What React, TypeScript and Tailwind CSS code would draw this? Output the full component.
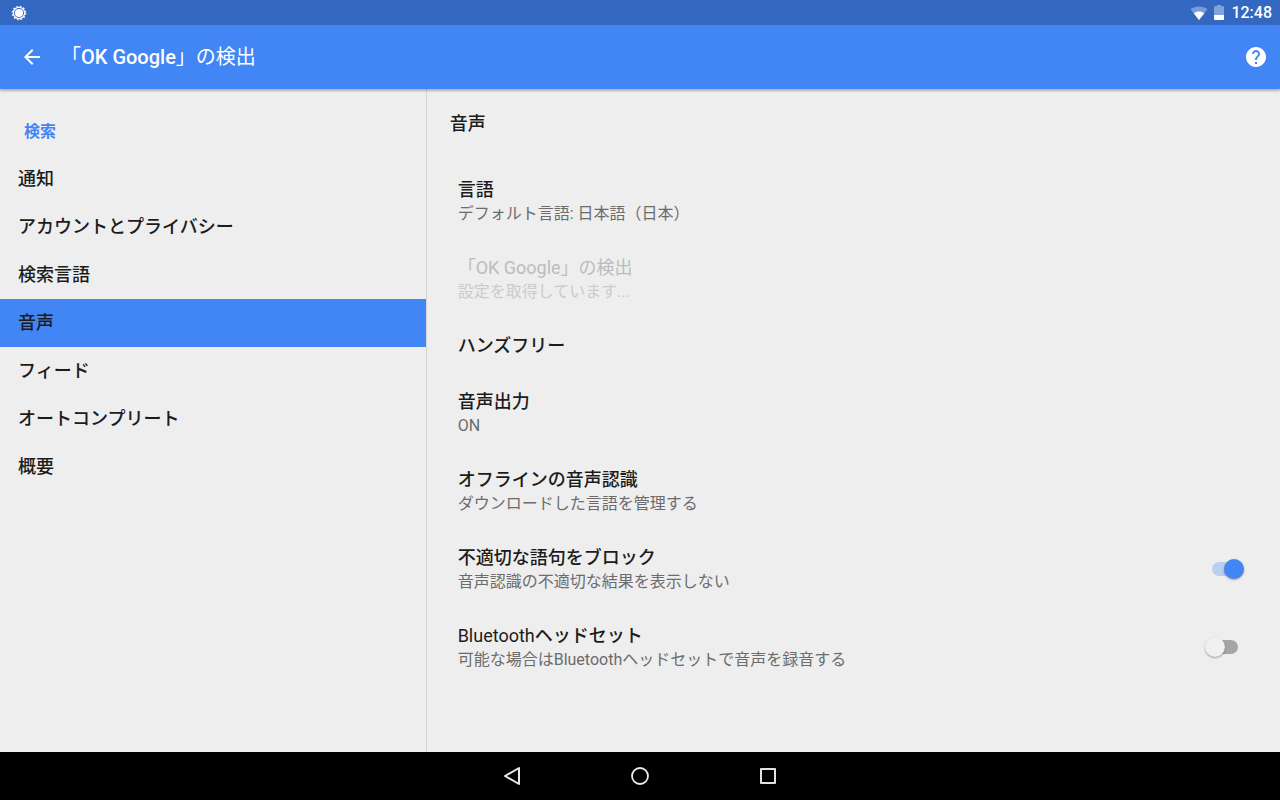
import { useId, useState } from "react";

const navItems = [
  "通知",
  "アカウントとプライバシー",
  "検索言語",
  "音声",
  "フィード",
  "オートコンプリート",
  "概要",
];

type Setting = {
  title: string;
  summary?: string;
  disabled?: boolean;
};

const settings: Setting[] = [
  { title: "言語", summary: "デフォルト言語: 日本語（日本）" },
  { title: "「OK Google」の検出", summary: "設定を取得しています...", disabled: true },
  { title: "ハンズフリー" },
  { title: "音声出力", summary: "ON" },
  { title: "オフラインの音声認識", summary: "ダウンロードした言語を管理する" },
];

function StatusBar() {
  return (
    <div className="flex h-[25px] items-center justify-between bg-[#3367c0] pl-[11px] pr-2 text-white">
      <svg className="size-4" viewBox="0 0 16 16" fill="none" stroke="#fff">
        <circle cx="8" cy="8" r="6.5" strokeWidth="1.8" strokeDasharray="1.7 1.703" opacity=".85" />
        <circle cx="8" cy="8" r="5.6" strokeWidth="1.2" />
        <circle cx="8" cy="8" r="4.1" fill="#fff" stroke="none" />
      </svg>
      <div className="flex items-center">
        <svg className="h-4 w-[18px]" viewBox="0 0 18 16" fill="#fff">
          <path d="M9 15 .5 4.200C5.300.7 12.700.7 17.500 4.200Z" opacity=".35" />
          <path d="M9 15 3.700 8.300c3-2.300 7.600-2.300 10.600 0Z" />
        </svg>
        <svg className="ml-[6px] h-4 w-[10px]" viewBox="0 0 10 16" fill="#fff">
          <path d="M3 0h4v1.200h2.200c.5 0 .8.300.8.800V10H0V2c0-.5.300-.8.800-.8H3Z" opacity=".4" />
          <path d="M0 10h10v4.200c0 .5-.3.800-.8.800H.8c-.5 0-.8-.3-.8-.8Z" />
        </svg>
        <span className="ml-[7px] text-base font-medium">12:48</span>
      </div>
    </div>
  );
}

function Header() {
  return (
    <header className="z-10 flex h-16 items-center bg-[#4285f4] pl-5 pr-3 text-white shadow-[0_2px_2px_rgba(0,0,0,0.25)]">
      <button type="button" aria-label="戻る" className="size-6">
        <svg viewBox="0 0 24 24" fill="#fff">
          <path d="M20 11H7.830l5.590-5.590L12 4l-8 8 8 8 1.410-1.410L7.830 13H20v-2z" />
        </svg>
      </button>
      <h1 className="ml-[17px] flex-1 text-xl">
        「<span className="font-medium">OK Google</span>」の検出
      </h1>
      <button type="button" aria-label="ヘルプ" className="size-6">
        <svg viewBox="0 0 24 24" fill="#fff">
          <path d="M12 2C6.480 2 2 6.480 2 12s4.480 10 10 10 10-4.480 10-10S17.520 2 12 2zm1 17h-2v-2h2v2zm2.070-7.750l-.9.920C13.450 12.900 13 13.500 13 15h-2v-.5c0-1.100.450-2.100 1.170-2.830l1.240-1.260c.370-.360.590-.860.590-1.410 0-1.100-.9-2-2-2s-2 .9-2 2H8c0-2.210 1.790-4 4-4s4 1.790 4 4c0 .880-.360 1.680-.930 2.250z" />
        </svg>
      </button>
    </header>
  );
}

function Sidebar({ active }: { active: string }) {
  return (
    <nav className="w-1/3 border-r border-[#d6d6d6]">
      <h2 className="pb-[11px] pl-6 pt-[31px] text-base font-bold text-[#4285f4]">検索</h2>
      <ul>
        {navItems.map((item) => (
          <li key={item}>
            <a
              href="#"
              className={`flex h-12 items-center px-[18px] text-lg font-medium ${item === active ? "bg-[#4285f4]" : ""}`}
            >
              {item}
            </a>
          </li>
        ))}
      </ul>
    </nav>
  );
}

function SettingRow({ title, summary, disabled }: Setting) {
  return (
    <button type="button" disabled={disabled} className="block w-full px-[31px] py-4 text-left">
      <span className={`block text-lg leading-6 ${disabled ? "text-[#bcbcbc]" : "font-medium"}`}>{title}</span>
      {summary && (
        <span className={`-mb-0.5 block text-base leading-6 ${disabled ? "text-[#cbcbcb]" : "text-[#6c6c6c]"}`}>
          {summary}
        </span>
      )}
    </button>
  );
}

function SwitchRow({ title, summary, initial }: { title: React.ReactNode; summary: string; initial: boolean }) {
  const id = useId();
  const [on, setOn] = useState(initial);
  return (
    <div className="flex items-center py-4 pl-[31px] pr-[42px]">
      <label htmlFor={id} className="flex-1">
        <span className="block text-lg font-medium leading-6">{title}</span>
        <span className="-mb-0.5 block text-base leading-6 text-[#6c6c6c]">{summary}</span>
      </label>
      <input
        id={id}
        type="checkbox"
        role="switch"
        checked={on}
        onChange={(e) => setOn(e.target.checked)}
        className="relative h-[14px] w-[26px] appearance-none rounded-full bg-[#a5a5a5] before:absolute before:-left-[7px] before:-top-[3px] before:size-5 before:rounded-full before:bg-[#f0f0f0] before:shadow-[0_1px_2px_rgba(0,0,0,0.35)] checked:bg-[#b9cff1] checked:before:left-3 checked:before:bg-[#4285f4]"
      />
    </div>
  );
}

function NavBar() {
  return (
    <footer className="flex h-12 items-center justify-center gap-[104px] bg-black">
      <button type="button" aria-label="戻る" className="size-6">
        <svg viewBox="0 0 24 24" fill="none" stroke="#e8eaea" strokeWidth="2" strokeLinejoin="round">
          <path d="M19 4v16L5 12Z" />
        </svg>
      </button>
      <button type="button" aria-label="ホーム" className="size-6">
        <svg viewBox="0 0 24 24" fill="none" stroke="#e8eaea" strokeWidth="1.8">
          <circle cx="12" cy="12" r="8" />
        </svg>
      </button>
      <button type="button" aria-label="アプリ履歴" className="size-6">
        <svg viewBox="0 0 24 24" fill="none" stroke="#e0e3e3" strokeWidth="2" strokeLinejoin="round">
          <path d="M5 5h14v14H5Z" />
        </svg>
      </button>
    </footer>
  );
}

export default function App() {
  return (
    <div className="flex min-h-screen flex-col bg-[#eeeeee] font-[Roboto,'Noto_Sans_CJK_JP',sans-serif] text-[#1c1c1c]">
      <StatusBar />
      <Header />
      <main className="flex flex-1">
        <Sidebar active="音声" />
        <section className="flex-1">
          <h2 className="px-[23px] pb-[26px] pt-[23px] text-lg font-medium leading-6">音声</h2>
          {settings.map((s) => (
            <SettingRow key={s.title} {...s} />
          ))}
          <SwitchRow title="不適切な語句をブロック" summary="音声認識の不適切な結果を表示しない" initial={true} />
          <SwitchRow
            title={
              <>
                <span className="font-normal">Bluetooth</span>ヘッドセット
              </>
            }
            summary="可能な場合はBluetoothヘッドセットで音声を録音する"
            initial={false}
          />
        </section>
      </main>
      <NavBar />
    </div>
  );
}
